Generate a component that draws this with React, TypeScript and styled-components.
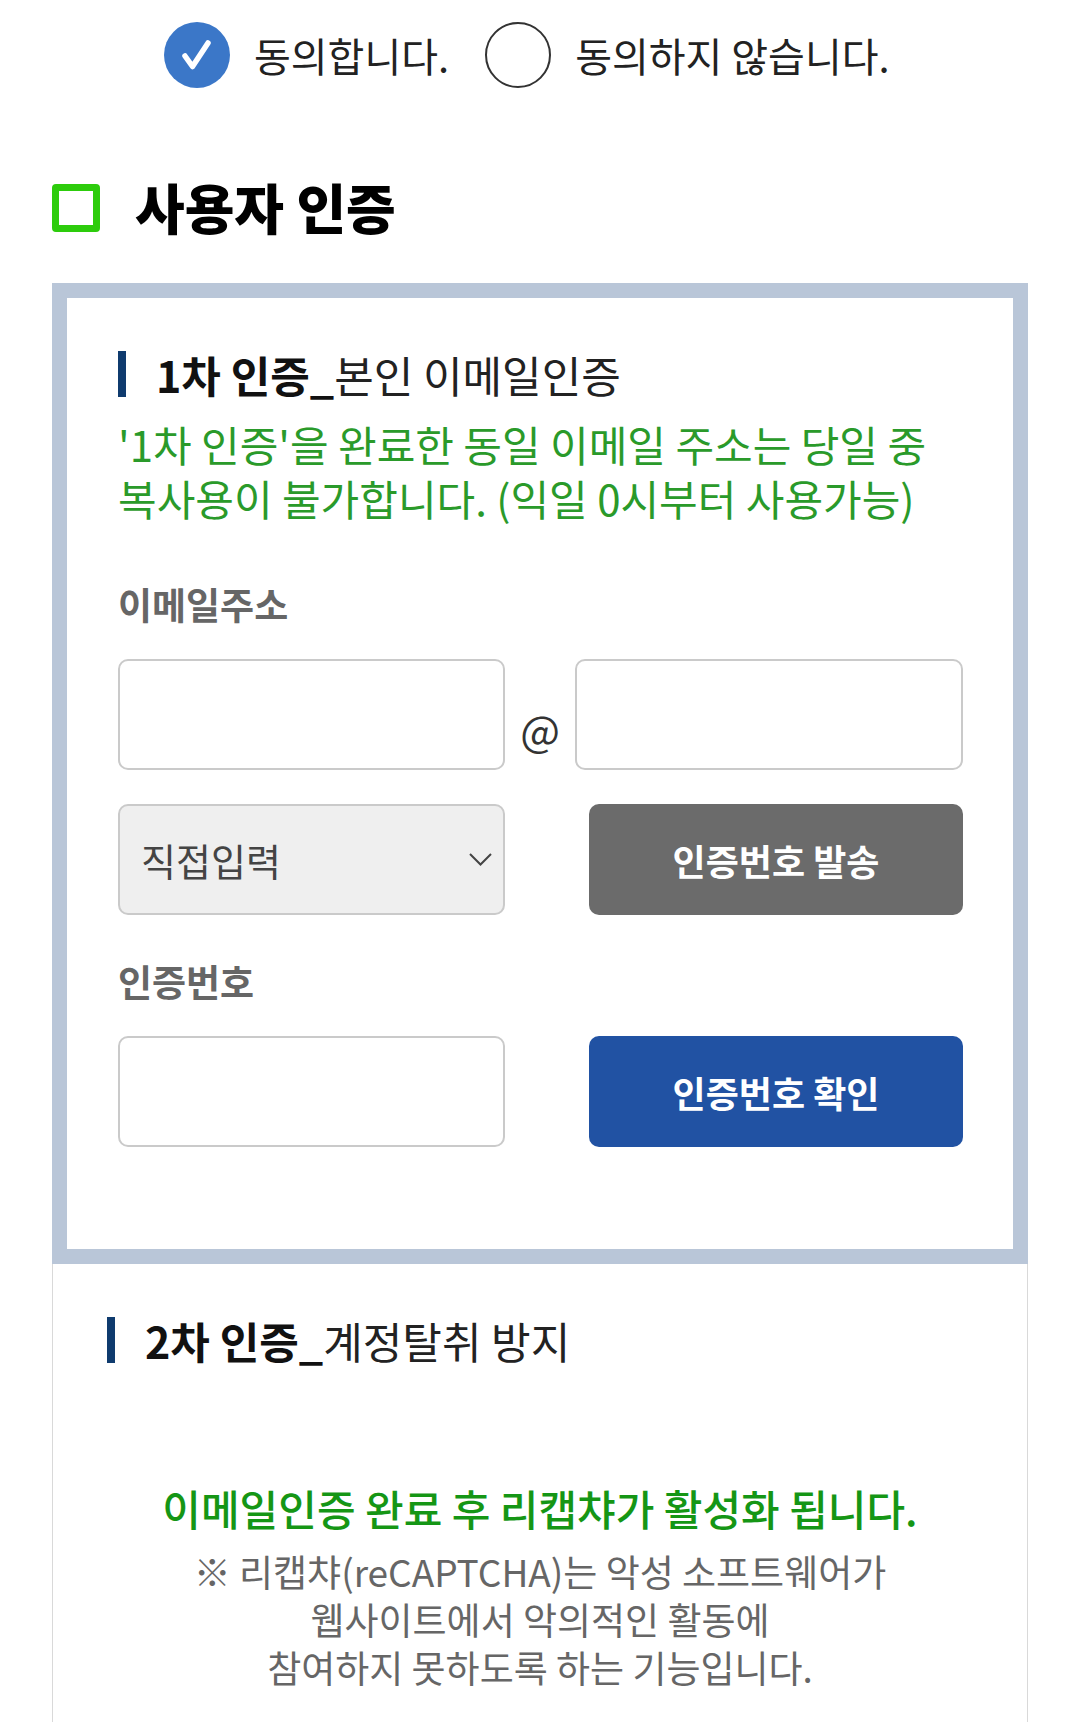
import React from 'react';
import styled, { createGlobalStyle } from 'styled-components';

const GlobalStyle = createGlobalStyle`
  body {
    margin: 0;
    background: #fff;
    font-family: "Noto Sans CJK KR", "Noto Sans", sans-serif;
  }
`;

const App: React.FC = () => {
  return (
    <Page>
      <GlobalStyle />
      <AgreeRow>
        <AgreeOption>
          <RadioCircle $checked>
            <svg width="66" height="66" viewBox="0 0 66 66">
              <path d="M21 34 L28.5 44.5 L44 21" fill="none" stroke="#fff" strokeWidth="5.5" strokeLinecap="round" strokeLinejoin="round" />
            </svg>
          </RadioCircle>
          <AgreeText>동의합니다.</AgreeText>
        </AgreeOption>
        <AgreeOption>
          <RadioCircle />
          <AgreeText>동의하지 않습니다.</AgreeText>
        </AgreeOption>
      </AgreeRow>

      <Heading>
        <HeadingMark />
        <HeadingText>사용자 인증</HeadingText>
      </Heading>

      <Card>
        <PrimaryPanel>
          <StepTitle>
            <StepBar />
            <StepName>1차 인증_</StepName>
            <StepDesc>본인 이메일인증</StepDesc>
          </StepTitle>
          <Notice>
            '1차 인증'을 완료한 동일 이메일 주소는 당일 중
            <br />
            복사용이 불가합니다. (익일 0시부터 사용가능)
          </Notice>

          <FieldLabel $top={58}>이메일주소</FieldLabel>
          <FieldRow>
            <TextBox type="text" />
            <AtSign>@</AtSign>
            <TextBox type="text" $width={388} />
          </FieldRow>
          <FieldRow $top={34}>
            <SelectBox>
              <span>직접입력</span>
              <svg width="23" height="13" viewBox="0 0 23 13">
                <path d="M1 1 L11.5 11.5 L22 1" fill="none" stroke="#444" strokeWidth="2" />
              </svg>
            </SelectBox>
            <ActionButton $bg="#6b6b6b">인증번호 발송</ActionButton>
          </FieldRow>

          <FieldLabel $top={45}>인증번호</FieldLabel>
          <FieldRow>
            <TextBox type="text" />
            <ActionButton $bg="#2152a3">인증번호 확인</ActionButton>
          </FieldRow>
        </PrimaryPanel>

        <SecondaryPanel>
          <StepTitle>
            <StepBar />
            <StepName>2차 인증_</StepName>
            <StepDesc>계정탈취 방지</StepDesc>
          </StepTitle>
          <CaptchaNotice>이메일인증 완료 후 리캡챠가 활성화 됩니다.</CaptchaNotice>
          <CaptchaHelp>
            ※ 리캡챠(reCAPTCHA)는 악성 소프트웨어가
            <br />
            웹사이트에서 악의적인 활동에
            <br />
            참여하지 못하도록 하는 기능입니다.
          </CaptchaHelp>
        </SecondaryPanel>
      </Card>
    </Page>
  );
};

const Page = styled.div`
  width: 1080px;
  overflow: hidden;
`;

const AgreeRow = styled.div`
  display: flex;
  align-items: center;
  gap: 36px;
  padding: 22px 0 0 164px;
`;

const AgreeOption = styled.label`
  display: flex;
  align-items: center;
  gap: 24px;
`;

const RadioCircle = styled.span<{ $checked?: boolean }>`
  width: 66px;
  height: 66px;
  box-sizing: border-box;
  border-radius: 50%;
  display: flex;
  align-items: center;
  justify-content: center;
  background: ${(p) => (p.$checked ? '#3b77c8' : '#fff')};
  border: ${(p) => (p.$checked ? 'none' : '2px solid #333')};
`;

const AgreeText = styled.span`
  font-size: 40px;
  color: #222;
  line-height: 44px;
`;

const Heading = styled.div`
  display: flex;
  align-items: center;
  gap: 35px;
  margin-top: 89px;
  padding-left: 52px;
`;

const HeadingMark = styled.span`
  width: 48px;
  height: 48px;
  box-sizing: border-box;
  border: 7px solid #2dcc0c;
  border-radius: 4px;
  margin-top: 2px;
`;

const HeadingText = styled.h2`
  margin: 0;
  font-size: 54px;
  line-height: 60px;
  font-weight: 900;
  color: #000;
`;

const Card = styled.div`
  margin: 46px 0 0 52px;
  width: 976px;
  box-sizing: border-box;
  border-left: 1px solid #d9d9d9;
  border-right: 1px solid #d9d9d9;
`;

const PrimaryPanel = styled.section`
  margin: 0 -1px;
  border: 15px solid #b9c6d8;
  padding: 51px 50px 102px 51px;
`;

const SecondaryPanel = styled.section`
  padding: 51px 54px 80px 54px;
`;

const StepTitle = styled.h3`
  margin: 0;
  display: flex;
  align-items: center;
  font-size: 43px;
  line-height: 50px;
`;

const StepBar = styled.span`
  width: 8px;
  height: 46px;
  background: #0f3b6e;
  margin-right: 30px;
`;

const StepName = styled.span`
  font-weight: 700;
  color: #111;
`;

const StepDesc = styled.span`
  font-weight: 400;
  color: #222;
`;

const Notice = styled.p`
  margin: 18px 0 0;
  font-size: 42px;
  line-height: 54px;
  color: #2a9a2a;
`;

const FieldLabel = styled.div<{ $top: number }>`
  margin-top: ${(p) => p.$top}px;
  font-size: 37px;
  line-height: 42px;
  font-weight: 700;
  color: #666;
`;

const FieldRow = styled.div<{ $top?: number }>`
  display: flex;
  align-items: stretch;
  justify-content: space-between;
  margin-top: ${(p) => p.$top ?? 34}px;
  height: 111px;
`;

const TextBox = styled.input<{ $width?: number }>`
  width: ${(p) => p.$width ?? 387}px;
  height: 111px;
  box-sizing: border-box;
  border: 2px solid #cacaca;
  border-radius: 10px;
  background: #fff;
  outline: none;
`;

const AtSign = styled.span`
  flex: 1;
  align-self: flex-end;
  text-align: center;
  font-size: 42px;
  line-height: 42px;
  margin-bottom: 20px;
  color: #333;
`;

const SelectBox = styled.div`
  width: 387px;
  box-sizing: border-box;
  border: 2px solid #cacaca;
  border-radius: 10px;
  background: #efefef;
  display: flex;
  align-items: center;
  justify-content: space-between;
  padding: 0 11px 0 21px;
  font-size: 38px;
  color: #444;
`;

const ActionButton = styled.button<{ $bg: string }>`
  width: 374px;
  border: none;
  border-radius: 10px;
  background: ${(p) => p.$bg};
  color: #fff;
  font-family: inherit;
  font-size: 36px;
  font-weight: 700;
`;

const CaptchaNotice = styled.p`
  margin: 116px 0 0;
  text-align: center;
  font-size: 42px;
  line-height: 54px;
  font-weight: 500;
  color: #159615;
`;

const CaptchaHelp = styled.p`
  margin: 12px 0 0;
  text-align: center;
  font-size: 37px;
  line-height: 48px;
  color: #666;
`;

export default App;
